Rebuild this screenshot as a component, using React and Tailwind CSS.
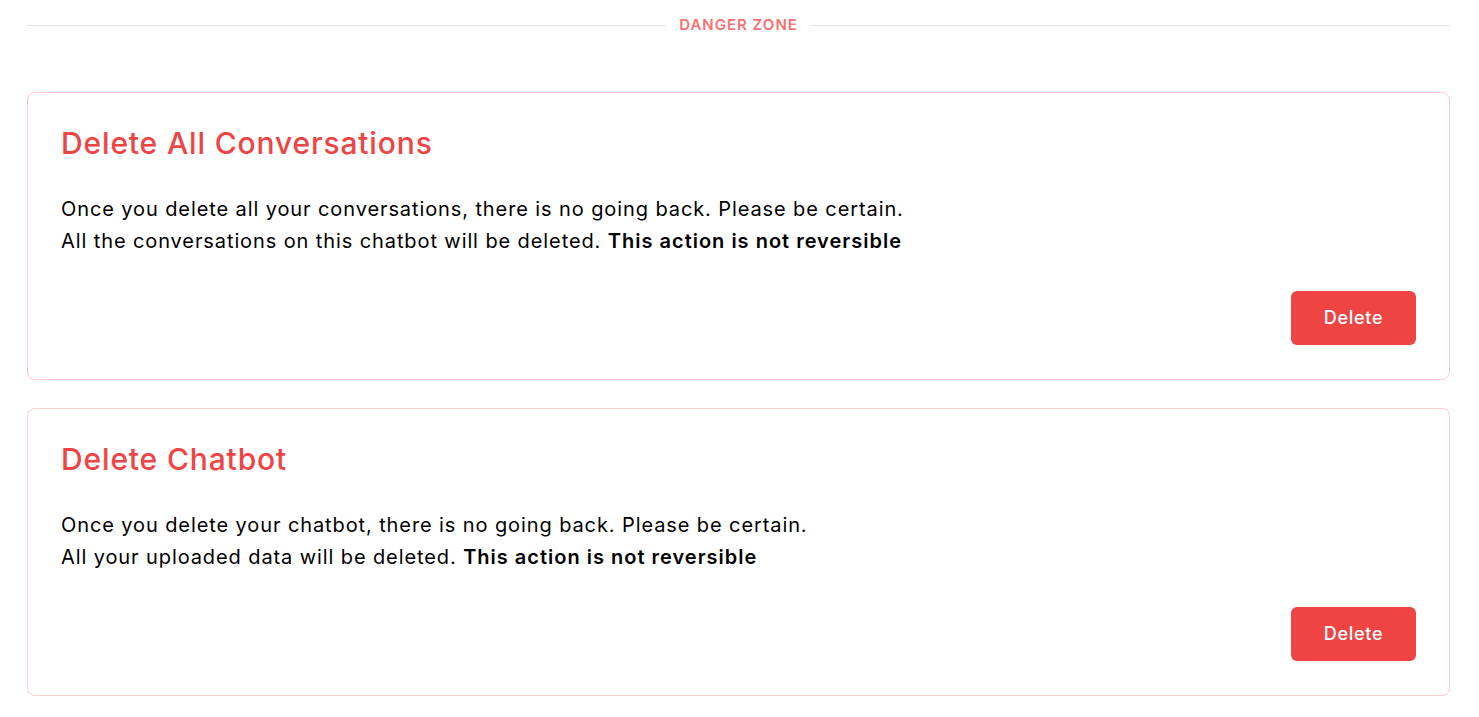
const cards = [
  {
    title: 'Delete All Conversations',
    line1: 'Once you delete all your conversations, there is no going back. Please be certain.',
    line2: 'All the conversations on this chatbot will be deleted.',
  },
  {
    title: 'Delete Chatbot',
    line1: 'Once you delete your chatbot, there is no going back. Please be certain.',
    line2: 'All your uploaded data will be deleted.',
  },
];

const DangerCard = ({ title, line1, line2 }) => (
  <div className="rounded-lg border border-[#fecaca] bg-white pl-[33px] pr-[33px] pt-[32px] pb-[34px]">
    <h2 className="text-3xl font-medium tracking-[0.85px] text-[#ef4444]">{title}</h2>
    <p className="mt-8 text-xl leading-8 tracking-[0.9px] text-black">
      {line1}
      <br />
      {line2} <span className="font-semibold tracking-[1px]">This action is not reversible</span>
    </p>
    <div className="mt-[34px] flex justify-end">
      <button className="h-[54px] w-[125px] rounded-md bg-[#ef4444] text-lg font-medium tracking-[0.7px] text-white">
        Delete
      </button>
    </div>
  </div>
);

export default function App() {
  return (
    <div className="min-h-screen bg-white pl-[27px] pr-[29px] pt-[15px] font-['Inter',sans-serif]">
      <div className="flex h-5 items-center gap-3">
        <div className="h-px flex-1 bg-[#e5e7eb]" />
        <span className="text-[15px] font-semibold uppercase tracking-[1px] text-[#f87171]">Danger Zone</span>
        <div className="h-px flex-1 bg-[#e5e7eb]" />
      </div>
      <div className="mt-[57px] flex flex-col gap-[28px]">
        {cards.map(c => (
          <DangerCard key={c.title} {...c} />
        ))}
      </div>
    </div>
  );
}
